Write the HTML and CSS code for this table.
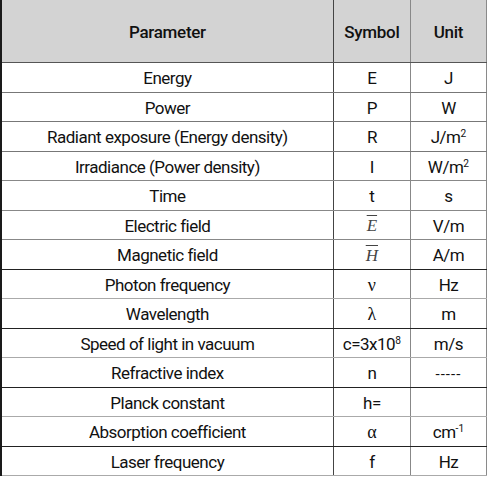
FILE: index.html
```html
<!DOCTYPE html>
<html>
<head>
<meta charset="utf-8">
<link rel="stylesheet" href="styles.css">
</head>
<body>
<table class="params">
  <colgroup>
    <col class="c-param">
    <col class="c-sym">
    <col class="c-unit">
  </colgroup>
  <thead>
    <tr class="head"><th>Parameter</th><th>Symbol</th><th>Unit</th></tr>
  </thead>
  <tbody>
    <tr class="mid"><td>Energy</td><td>E</td><td>J</td></tr>
    <tr class="mid"><td>Power</td><td>P</td><td>W</td></tr>
    <tr class="mid"><td>Radiant exposure (Energy density)</td><td>R</td><td>J/m<sup>2</sup></td></tr>
    <tr class="mid2"><td>Irradiance (Power density)</td><td>I</td><td>W/m<sup>2</sup></td></tr>
    <tr class="mid2"><td>Time</td><td>t</td><td>s</td></tr>
    <tr class="mid2"><td>Electric field</td><td><span class="vec">E</span></td><td>V/m</td></tr>
    <tr class="dark"><td>Magnetic field</td><td><span class="vec">H</span></td><td>A/m</td></tr>
    <tr class="light"><td>Photon frequency</td><td><span class="greek">ν</span></td><td>Hz</td></tr>
    <tr class="dark"><td>Wavelength</td><td><span class="greek">λ</span></td><td>m</td></tr>
    <tr class="light"><td>Speed of light in vacuum</td><td>c=3x10<sup>8</sup></td><td>m/s</td></tr>
    <tr class="dark"><td>Refractive index</td><td>n</td><td><span class="dashes">-----</span></td></tr>
    <tr class="light"><td>Planck constant</td><td>h=</td><td></td></tr>
    <tr class="dark"><td>Absorption coefficient</td><td><span class="greek">α</span></td><td>cm<sup>-1</sup></td></tr>
    <tr class="light"><td>Laser frequency</td><td>f</td><td>Hz</td></tr>
  </tbody>
</table>
</body>
</html>
```
FILE: styles.css
```css
html, body {
  margin: 0;
  padding: 0;
  background: #ffffff;
}
.params {
  border-collapse: collapse;
  table-layout: fixed;
  width: 487px;
  font-family: "Roboto", "Liberation Sans", sans-serif;
  font-size: 17px;
  letter-spacing: -0.5px;
  color: #111;
  border-left: 2px solid #1a1a1a;
  border-right: 1px solid #8a8a8a;
}
.c-param { width: 332px; }
.c-sym { width: 77px; }
.c-unit { width: 76px; }
.params th, .params td {
  text-align: center;
  padding: 0;
  border-left: 1px solid #444;
}
.params th:first-child, .params td:first-child { border-left: none; }
.params td:nth-child(3), .params th:nth-child(3) { border-left-color: #888; }
.head th {
  height: 61px;
  padding-top: 1px;
  background: #d3d3d3;
  font-weight: 500;
  font-size: 17px;
  letter-spacing: -0.3px;
  border-bottom: 1px solid #555;
}
.params tbody td {
  height: 26.5px;
  padding-top: 2px;
  line-height: 18px;
}
.mid td { border-bottom: 1px solid #777; }
.mid2 td { border-bottom: 1px solid #888; }
.dark td { border-bottom: 1px solid #222; }
.light td { border-bottom: 1px solid #aaa; }
sup {
  font-size: 0.6em;
  vertical-align: 0.55em;
  line-height: 0;
  letter-spacing: 0;
}
.dashes {
  letter-spacing: 1px;
  font-size: 15px;
}
.vec {
  font-family: "Liberation Serif", serif;
  font-style: italic;
  font-size: 17px;
  letter-spacing: 0;
  text-decoration: overline;
  color: #444;
}
.greek {
  font-family: "Liberation Serif", serif;
  font-size: 18px;
  letter-spacing: 0;
}
```
